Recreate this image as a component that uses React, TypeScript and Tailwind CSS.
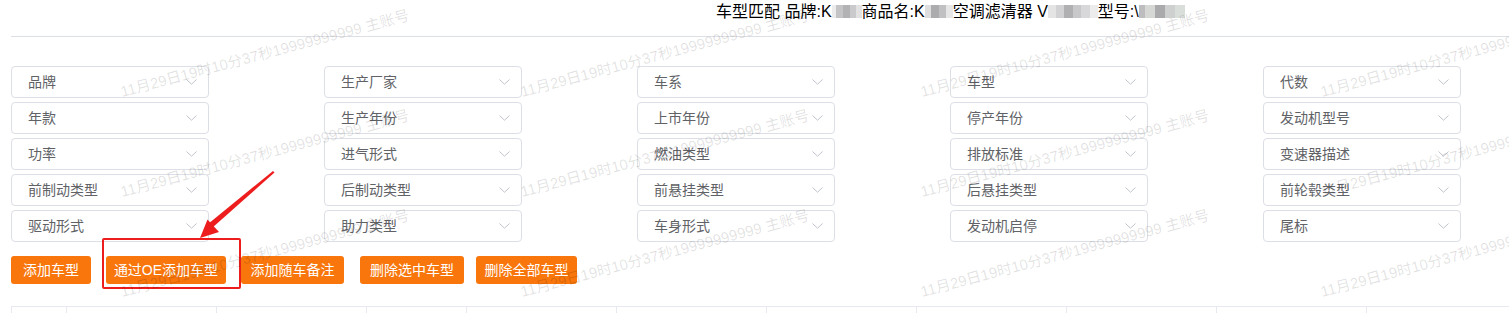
import React from "react";

const FIELDS = [
  ["品牌", "生产厂家", "车系", "车型", "代数"],
  ["年款", "生产年份", "上市年份", "停产年份", "发动机型号"],
  ["功率", "进气形式", "燃油类型", "排放标准", "变速器描述"],
  ["前制动类型", "后制动类型", "前悬挂类型", "后悬挂类型", "前轮毂类型"],
  ["驱动形式", "助力类型", "车身形式", "发动机启停", "尾标"],
];

const BUTTONS = [
  { label: "添加车型", cls: "w-[80px]" },
  { label: "通过OE添加车型", cls: "w-[120px] ml-[15px]" },
  { label: "添加随车备注", cls: "w-[103px] ml-[15px]" },
  { label: "删除选中车型", cls: "w-[104px] ml-[16px]" },
  { label: "删除全部车型", cls: "w-[101px] ml-[12px]" },
];

const COLS = [55, 150, 150, 100, 150, 150, 150, 150, 150, 150];

const WATERMARK = "11月29日19时10分37秒19999999999 主账号";

function Mosaic({ blocks }: { blocks: [string, number][] }) {
  return (
    <span className="inline-flex h-[13px] align-[-1px]">
      {blocks.map(([c, w], i) => (
        <span key={i} style={{ background: c, width: w }} className="h-full" />
      ))}
    </span>
  );
}

function Chevron() {
  return (
    <svg width="11" height="6" viewBox="0 0 11 6" fill="none" className="shrink-0">
      <path d="M0.5 0.5 L5.5 5.2 L10.5 0.5" stroke="#c0c4cc" strokeWidth="1" />
    </svg>
  );
}

export default function App() {
  const marks: { x: number; y: number }[] = [];
  for (let i = 0; i < 4; i++) for (let j = 0; j < 3; j++) marks.push({ x: 123 + 400 * i, y: 100 + 100 * j });

  return (
    <div
      className="relative w-[1509px] h-[313px] overflow-hidden bg-white"
      style={{ fontFamily: '"Liberation Sans", "Noto Sans CJK SC", sans-serif' }}
    >
      <div className="pl-[11px]">
        {/* Header */}
        <div className="h-[37px] border-b border-[#dcdfe6]">
          <div className="pl-[705px] text-[16px] leading-[24px] text-black whitespace-nowrap">
            车型匹配 品牌:K
            <Mosaic blocks={[["#ececec", 4], ["#c4c4c6", 7], ["#b2b2b4", 7], ["#cacacc", 6], ["#e2e2e2", 6]]} />
            商品名:K
            <Mosaic blocks={[["#dedede", 6], ["#acacae", 8], ["#c0c0c2", 7], ["#e6e6e6", 7]]} />
            空调滤清器 V
            <Mosaic blocks={[["#e4e4e4", 8], ["#d2d2d4", 8], ["#b0b0b2", 9], ["#c8c8ca", 8], ["#d8d8da", 9], ["#ececec", 8]]} />
            型号:\
            <Mosaic blocks={[["#bdbdbf", 6], ["#d6d8d6", 10], ["#aaaaac", 10], ["#cdd0ce", 10], ["#dadedb", 10]]} />
          </div>
        </div>

        {/* Filters */}
        <div className="mt-[29px] grid grid-cols-[repeat(5,198px)] gap-x-[115px] gap-y-[4px]">
          {FIELDS.flat().map(f => (
            <div
              key={f}
              className="h-[32px] flex items-center justify-between pl-[16px] pr-[11px] border border-[#dcdfe6] rounded-[4px] bg-white"
            >
              <span className="text-[14px] text-[#606266]">{f}</span>
              <Chevron />
            </div>
          ))}
        </div>

        {/* Actions */}
        <div className="mt-[14px] flex">
          {BUTTONS.map(b => (
            <button
              key={b.label}
              className={`${b.cls} h-[28px] rounded-[3px] bg-[#f8760c] text-white text-[14px] flex items-center justify-center`}
            >
              {b.label}
            </button>
          ))}
        </div>

        {/* Table header */}
        <div className="mt-[22px] flex h-[40px] border-t border-l border-[#e6e9f0]">
          {COLS.map((w, i) => (
            <div key={i} style={{ width: w }} className="shrink-0 border-r border-[#e6e9f0]" />
          ))}
          <div className="flex-1" />
        </div>
      </div>

      {/* Annotation */}
      <div className="absolute left-[102px] top-[238px] w-[139px] h-[51px] border-2 border-[#ee1d1d] rounded-[2px] pointer-events-none" />
      <svg className="absolute left-0 top-0 pointer-events-none" width="300" height="260">
        <polygon points="273,171 274.5,172.5 212,228 208,224" fill="#ee1d1d" />
        <polygon points="200,238 219,232 207.5,219.5" fill="#ee1d1d" />
      </svg>

      {/* Watermark */}
      <div className="absolute inset-0 pointer-events-none">
        {marks.map((m, i) => (
          <div
            key={i}
            className="absolute whitespace-nowrap text-[15px] leading-[16px] text-[rgba(0,0,0,0.12)] origin-bottom-left -rotate-[15deg]"
            style={{ left: m.x, top: m.y - 16 }}
          >
            {WATERMARK}
          </div>
        ))}
      </div>
    </div>
  );
}
